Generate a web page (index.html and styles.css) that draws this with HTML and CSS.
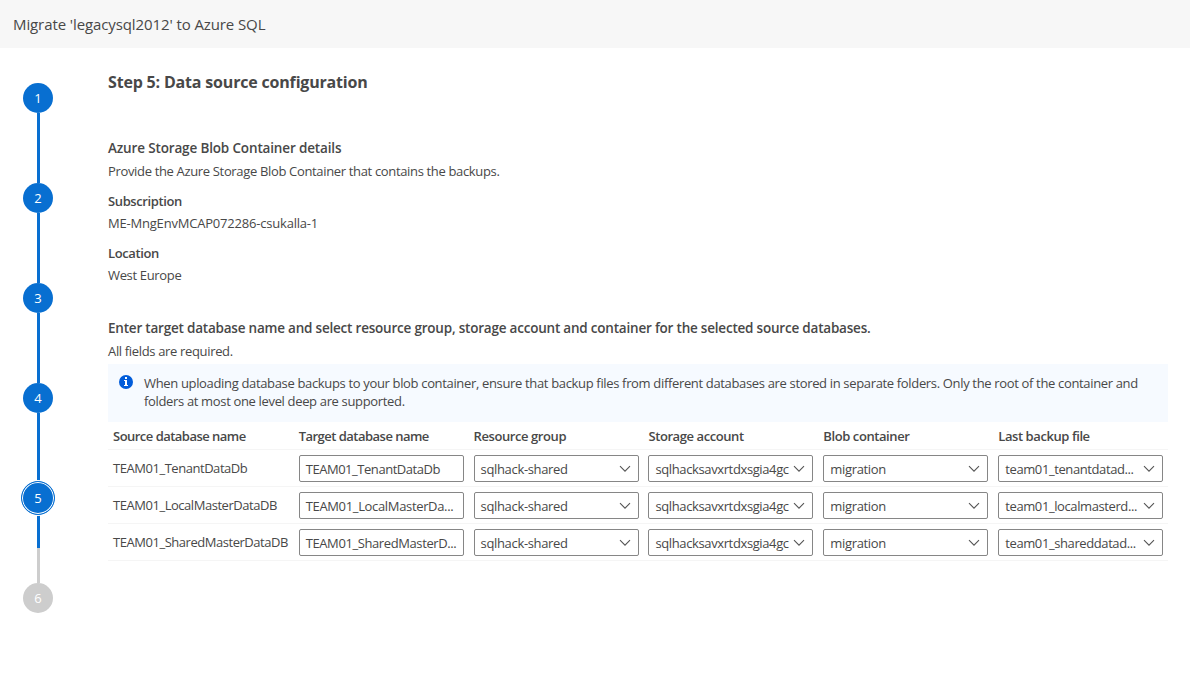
FILE: index.html
```html
<!DOCTYPE html>
<html lang="en">
<head>
<meta charset="utf-8">
<title>Migrate 'legacysql2012' to Azure SQL</title>
<link rel="stylesheet" href="styles.css">
</head>
<body>
<svg width="0" height="0" class="sprite"><symbol id="chevron" viewBox="0 0 12 8"><path d="M1 1.2L6 6.2L11 1.2" fill="none" stroke="currentColor" stroke-width="1.1"/></symbol></svg>
<header class="topbar"><span class="title">Migrate 'legacysql2012' to Azure SQL</span></header>
<div class="layout">
  <nav class="steps">
    <span class="step">1</span><span class="line"></span>
    <span class="step">2</span><span class="line"></span>
    <span class="step">3</span><span class="line"></span>
    <span class="step">4</span><span class="line"></span>
    <span class="step current">5</span><span class="line half"></span>
    <span class="step pending">6</span>
  </nav>
  <main class="content">
    <h1>Step 5: Data source configuration</h1>
    <h2>Azure Storage Blob Container details</h2>
    <p class="intro">Provide the Azure Storage Blob Container that contains the backups.</p>
    <h3>Subscription</h3>
    <p class="value id">ME-MngEnvMCAP072286-csukalla-1</p>
    <h3>Location</h3>
    <p class="value">West Europe</p>
    <h2 class="second">Enter target database name and select resource group, storage account and container for the selected source databases.</h2>
    <p class="intro">All fields are required.</p>
    <div class="info">
      <svg class="info-icon" width="14" height="14" viewBox="0 0 14 14"><circle cx="7" cy="7" r="7" fill="#015cda"/><path d="M6 2h2v2H6zM5 5h3v5h1v1H5v-1h1V6H5z" fill="#fff"/></svg>
      <p>When uploading database backups to your blob container, ensure that backup files from different databases are stored in separate folders. Only the root of the container and<br>folders at most one level deep are supported.</p>
    </div>
    <div class="row head">
      <span class="long">Source database name</span><span class="long">Target database name</span><span>Resource group</span><span>Storage account</span><span>Blob container</span><span>Last backup file</span>
    </div>
    <div class="row">
      <span class="db">TEAM01_TenantDataDb</span>
      <div class="field"><span class="db">TEAM01_TenantDataDb</span></div>
      <div class="field"><span>sqlhack-shared</span><svg><use href="#chevron"/></svg></div>
      <div class="field"><span class="account">sqlhacksavxrtdxsgia4gc</span><svg><use href="#chevron"/></svg></div>
      <div class="field"><span>migration</span><svg><use href="#chevron"/></svg></div>
      <div class="field"><span class="file">team01_tenantdatad...</span><svg><use href="#chevron"/></svg></div>
    </div>
    <div class="row">
      <span class="db">TEAM01_LocalMasterDataDB</span>
      <div class="field"><span>TEAM01_LocalMasterDa...</span></div>
      <div class="field"><span>sqlhack-shared</span><svg><use href="#chevron"/></svg></div>
      <div class="field"><span class="account">sqlhacksavxrtdxsgia4gc</span><svg><use href="#chevron"/></svg></div>
      <div class="field"><span>migration</span><svg><use href="#chevron"/></svg></div>
      <div class="field"><span class="file">team01_localmasterd...</span><svg><use href="#chevron"/></svg></div>
    </div>
    <div class="row">
      <span class="db">TEAM01_SharedMasterDataDB</span>
      <div class="field"><span class="file">TEAM01_SharedMasterD...</span></div>
      <div class="field"><span>sqlhack-shared</span><svg><use href="#chevron"/></svg></div>
      <div class="field"><span class="account">sqlhacksavxrtdxsgia4gc</span><svg><use href="#chevron"/></svg></div>
      <div class="field"><span>migration</span><svg><use href="#chevron"/></svg></div>
      <div class="field"><span class="file">team01_shareddatad...</span><svg><use href="#chevron"/></svg></div>
    </div>
  </main>
</div>
</body>
</html>
```
FILE: styles.css
```css
* { box-sizing: border-box; }
body { margin: 0; background: #fff; color: #484848; font: 13px/18px "Open Sans", "Noto Sans", sans-serif; letter-spacing: -0.34px; white-space: nowrap; overflow: hidden; }
h1, h2, h3, p { margin: 0; }
.sprite { display: block; }
.topbar { height: 48px; padding: 0 13px; background: #f7f7f7; display: flex; align-items: center; font-size: 15px; letter-spacing: -0.1px; }
.layout { display: flex; }
.steps { width: 76px; padding-top: 35px; display: flex; flex-direction: column; align-items: center; flex: none; }
.step { width: 30px; height: 30px; border-radius: 50%; background: #086fd1; color: #fff; display: flex; align-items: center; justify-content: center; letter-spacing: 0; }
.step.current { z-index: 1; width: 34px; height: 34px; margin: -2px 0; border: 1px solid #086fd1; box-shadow: inset 0 0 0 1px #fff, 0 0 0 1px #fff; }
.step.pending { background: #cdcdcd; }
.line { width: 3px; height: 70px; background: #086fd1; }
.line.half { background: linear-gradient(#086fd1 35px, #cdcdcd 35px); }
.content { width: 1060px; margin-left: 32px; padding-top: 22px; }
h1 { font-size: 16px; line-height: 24px; font-weight: 700; letter-spacing: -0.18px; }
h2 { font-size: 13.5px; line-height: 20px; font-weight: 600; margin-top: 44px; letter-spacing: -0.15px; }
h2.second { margin-top: 34px; letter-spacing: -0.21px; }
h3 { font-size: 13px; line-height: 18px; font-weight: 600; margin-top: 12px; letter-spacing: -0.39px; }
.intro { margin-top: 4px; }
.value { margin-top: 4px; }
.id { letter-spacing: -0.2px; }
.info { display: flex; height: 58px; margin-top: 4px; padding: 10px 11px; gap: 11px; background: #f6faff; }
.info-icon { margin-top: 1px; flex: none; }
.row { display: grid; grid-template-columns: 185.7px repeat(5, 174.9px); height: 37px; padding-left: 5px; border-bottom: 1px solid #f5f5f5; align-items: center; }
.row.head { height: 28px; font-weight: 600; letter-spacing: -0.42px; }
.row.head .long { letter-spacing: -0.52px; }
.field { width: 165px; height: 27px; border: 1px solid #868686; border-radius: 2px; padding: 1px 7px 0 6px; display: flex; align-items: center; justify-content: space-between; }
.field svg { width: 12px; height: 8px; color: #555; flex: none; }
.db { letter-spacing: -0.46px; }
.file { letter-spacing: -0.4px; }
.account { letter-spacing: -0.38px; }
```
